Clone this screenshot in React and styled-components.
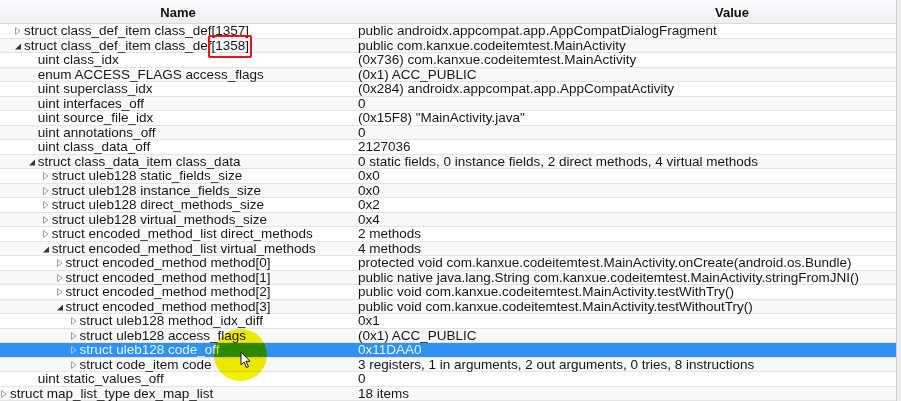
import React from "react";
import styled, { createGlobalStyle } from "styled-components";

const Global = createGlobalStyle`
  html, body { margin: 0; padding: 0; background: #fff; }
  body { width: 901px; height: 401px; overflow: hidden; }
`;

const Frame = styled.div`
  position: relative;
  width: 901px;
  height: 401px;
  overflow: hidden;
  display: flex;
  font-family: "Liberation Sans", Arial, sans-serif;
  font-size: 13.5px;
  color: #161616;
  background: #fff;
`;

const Table = styled.div`
  flex: 1;
  display: flex;
  flex-direction: column;
  overflow: hidden;
`;

const Scroll = styled.div`
  width: 4px;
  border-left: 1px solid #cfcfcf;
  background: #ececec;
`;

const Header = styled.div`
  height: 23px;
  flex: none;
  display: grid;
  grid-template-columns: 356px 752px;
  background: linear-gradient(#fbfcfd 0%, #f6f8fa 30%, #eceff2 100%);
  border-bottom: 1px solid #d6dadd;
`;

const HeadCell = styled.div`
  display: flex;
  align-items: center;
  justify-content: center;
  font-weight: bold;
  font-size: 13px;
  padding-top: 2px;
  color: #111;
`;

const Row = styled.div`
  height: 14.5px;
  flex: none;
  box-sizing: border-box;
  display: grid;
  grid-template-columns: 356px 1fr;
  align-items: center;
  border-bottom: 1px solid #e4e4e4;
  background: ${(p) => (p.$sel ? "#2f92f2" : p.$alt ? "#f8f8f8" : "#fff")};
  color: ${(p) => (p.$sel ? "#e6f1ff" : "inherit")};
  line-height: 14px;
  white-space: nowrap;
`;

const NameCell = styled.div`
  display: flex;
  align-items: center;
  padding-left: ${(p) => 10 + p.$level * 13.9}px;
  position: relative;
  overflow: visible;
`;

const ValueCell = styled.div`
  padding-left: 2px;
  overflow: hidden;
`;

const Arrow = styled.svg`
  position: absolute;
  left: ${(p) => 10 + p.$level * 13.9 - 10}px;
  top: 50%;
  transform: translateY(-50%);
`;

const Boxed = styled.span`
  position: relative;
  &::after {
    content: "";
    position: absolute;
    left: -3px;
    right: -3px;
    top: -3px;
    bottom: -5px;
    border: 2px solid #e5141c;
    border-radius: 2px;
  }
`;

const Spot = styled.div`
  position: absolute;
  left: 214px;
  top: 329px;
  width: 53px;
  height: 52px;
  border-radius: 50%;
  background: #f4ee00;
  mix-blend-mode: multiply;
  pointer-events: none;
`;

const Pointer = styled.svg`
  position: absolute;
  left: 240px;
  top: 351px;
`;

const rows = [
  [1, "c", "struct class_def_item class_def[1357]", "public androidx.appcompat.app.AppCompatDialogFragment"],
  [1, "e", "box", "public com.kanxue.codeitemtest.MainActivity"],
  [2, "l", "uint class_idx", "(0x736) com.kanxue.codeitemtest.MainActivity"],
  [2, "l", "enum ACCESS_FLAGS access_flags", "(0x1) ACC_PUBLIC"],
  [2, "l", "uint superclass_idx", "(0x284) androidx.appcompat.app.AppCompatActivity"],
  [2, "l", "uint interfaces_off", "0"],
  [2, "l", "uint source_file_idx", "(0x15F8) \"MainActivity.java\""],
  [2, "l", "uint annotations_off", "0"],
  [2, "l", "uint class_data_off", "2127036"],
  [2, "e", "struct class_data_item class_data", "0 static fields, 0 instance fields, 2 direct methods, 4 virtual methods"],
  [3, "c", "struct uleb128 static_fields_size", "0x0"],
  [3, "c", "struct uleb128 instance_fields_size", "0x0"],
  [3, "c", "struct uleb128 direct_methods_size", "0x2"],
  [3, "c", "struct uleb128 virtual_methods_size", "0x4"],
  [3, "c", "struct encoded_method_list direct_methods", "2 methods"],
  [3, "e", "struct encoded_method_list virtual_methods", "4 methods"],
  [4, "c", "struct encoded_method method[0]", "protected void com.kanxue.codeitemtest.MainActivity.onCreate(android.os.Bundle)"],
  [4, "c", "struct encoded_method method[1]", "public native java.lang.String com.kanxue.codeitemtest.MainActivity.stringFromJNI()"],
  [4, "c", "struct encoded_method method[2]", "public void com.kanxue.codeitemtest.MainActivity.testWithTry()"],
  [4, "e", "struct encoded_method method[3]", "public void com.kanxue.codeitemtest.MainActivity.testWithoutTry()"],
  [5, "c", "struct uleb128 method_idx_diff", "0x1"],
  [5, "c", "struct uleb128 access_flags", "(0x1) ACC_PUBLIC"],
  [5, "c", "struct uleb128 code_off", "0x11DAA0", true],
  [5, "c", "struct code_item code", "3 registers, 1 in arguments, 2 out arguments, 0 tries, 8 instructions"],
  [2, "l", "uint static_values_off", "0"],
  [0, "c", "struct map_list_type dex_map_list", "18 items"],
];

function Toggle({ kind, level, sel }) {
  if (kind === "l") return null;
  if (kind === "e") {
    return (
      <Arrow $level={level} width="8" height="9" viewBox="0 0 8 9">
        <path d="M7 2 L7 8 L1 8 Z" fill={sel ? "#cfe3fb" : "#333"} />
      </Arrow>
    );
  }
  return (
    <Arrow $level={level} width="7" height="10" viewBox="0 0 7 10">
      <path d="M1.5 1.5 L6 5 L1.5 8.5 Z" fill="none" stroke={sel ? "#9cc6f3" : "#a0a0a0"} strokeWidth="1" />
    </Arrow>
  );
}

export default function App() {
  return (
    <>
      <Global />
      <Frame>
        <Table>
          <Header>
            <HeadCell>Name</HeadCell>
            <HeadCell>Value</HeadCell>
          </Header>
          {rows.map(([level, kind, name, value, sel], i) => (
            <Row key={i} $sel={sel} $alt={i % 2 === 1}>
              <NameCell $level={level}>
                <Toggle kind={kind} level={level} sel={sel} />
                {name === "box" ? (
                  <span>
                    struct class_def_item class_def<Boxed>[1358]</Boxed>
                  </span>
                ) : (
                  name
                )}
              </NameCell>
              <ValueCell>{value}</ValueCell>
            </Row>
          ))}
        </Table>
        <Scroll />
        <Spot />
        <Pointer width="12" height="18" viewBox="0 0 12 18">
          <path d="M1 1 L1 14 L4 11 L6.5 16.5 L8.5 15.6 L6 10.3 L10 10.3 Z" fill="#fff" stroke="#111" strokeWidth="1" strokeLinejoin="round" />
        </Pointer>
      </Frame>
    </>
  );
}
